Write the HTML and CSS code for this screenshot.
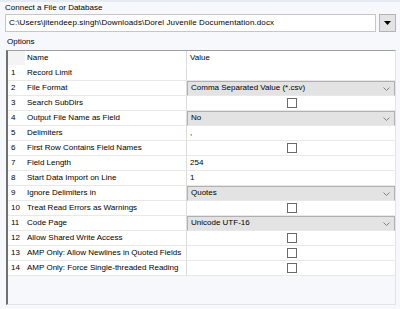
FILE: index.html
```html
<!DOCTYPE html>
<html lang="en">
<head>
  <meta charset="UTF-8">
  <title>Input Data - Configuration</title>
  <link rel="stylesheet" href="styles.css">
</head>
<body>
  <div class="panel">
    <!-- Connect a file -->
    <div class="label">Connect a File or Database</div>
    <div class="combo">
      <div class="combo-text">C:\Users\jitendeep.singh\Downloads\Dorel Juvenile Documentation.docx</div>
      <div class="combo-btn">
        <svg width="7" height="4" viewBox="0 0 7 4"><path d="M0 0h7L3.5 4z" fill="#000"/></svg>
      </div>
    </div>

    <!-- Options grid -->
    <div class="label options">Options</div>
    <div class="grid">
      <div class="row head">
        <div class="num"></div>
        <div class="name">Name</div>
        <div class="value">Value</div>
      </div>
      <div class="row first">
        <div class="num">1</div>
        <div class="name">Record Limit</div>
        <div class="value"></div>
      </div>
      <div class="row">
        <div class="num">2</div>
        <div class="name">File Format</div>
        <div class="value select">Comma Separated Value (*.csv)<svg class="chev" width="7" height="4" viewBox="0 0 7 4"><path d="M0.5 0.5L3.5 3.5L6.5 0.5" fill="none" stroke="#808080"/></svg></div>
      </div>
      <div class="row">
        <div class="num">3</div>
        <div class="name">Search SubDirs</div>
        <div class="value check"><span class="box"></span></div>
      </div>
      <div class="row">
        <div class="num">4</div>
        <div class="name">Output File Name as Field</div>
        <div class="value select">No<svg class="chev" width="7" height="4" viewBox="0 0 7 4"><path d="M0.5 0.5L3.5 3.5L6.5 0.5" fill="none" stroke="#808080"/></svg></div>
      </div>
      <div class="row">
        <div class="num">5</div>
        <div class="name">Delimiters</div>
        <div class="value">,</div>
      </div>
      <div class="row">
        <div class="num">6</div>
        <div class="name">First Row Contains Field Names</div>
        <div class="value check"><span class="box"></span></div>
      </div>
      <div class="row">
        <div class="num">7</div>
        <div class="name">Field Length</div>
        <div class="value">254</div>
      </div>
      <div class="row">
        <div class="num">8</div>
        <div class="name">Start Data Import on Line</div>
        <div class="value">1</div>
      </div>
      <div class="row">
        <div class="num">9</div>
        <div class="name">Ignore Delimiters in</div>
        <div class="value select">Quotes<svg class="chev" width="7" height="4" viewBox="0 0 7 4"><path d="M0.5 0.5L3.5 3.5L6.5 0.5" fill="none" stroke="#808080"/></svg></div>
      </div>
      <div class="row">
        <div class="num">10</div>
        <div class="name">Treat Read Errors as Warnings</div>
        <div class="value check"><span class="box"></span></div>
      </div>
      <div class="row">
        <div class="num">11</div>
        <div class="name">Code Page</div>
        <div class="value select">Unicode UTF-16<svg class="chev" width="7" height="4" viewBox="0 0 7 4"><path d="M0.5 0.5L3.5 3.5L6.5 0.5" fill="none" stroke="#808080"/></svg></div>
      </div>
      <div class="row">
        <div class="num">12</div>
        <div class="name">Allow Shared Write Access</div>
        <div class="value check"><span class="box"></span></div>
      </div>
      <div class="row">
        <div class="num">13</div>
        <div class="name">AMP Only: Allow Newlines in Quoted Fields</div>
        <div class="value check"><span class="box"></span></div>
      </div>
      <div class="row">
        <div class="num">14</div>
        <div class="name">AMP Only: Force Single-threaded Reading</div>
        <div class="value check"><span class="box"></span></div>
      </div>
    </div>
  </div>
</body>
</html>
```
FILE: styles.css
```css
/* Reset base */
* {
  box-sizing: border-box;
  margin: 0;
  padding: 0;
}
body {
  font-family: 'Liberation Sans', Arial, sans-serif;
  font-size: 8px;
  color: #000;
  background: #f7f8fb;
  border-top: 2px solid #e6eaf2;
  width: 400px;
  height: 309px;
  overflow: hidden;
}
.panel {
  padding: 0 4px 0 5px;
}
.label {
  height: 12px;
  line-height: 11px;
}
/* Combo del file */
.combo {
  display: flex;
  gap: 3px;
  height: 18px;
}
.combo-text {
  flex: 1;
  background: #fff;
  border: 1px solid #c6c6c6;
  line-height: 16px;
  padding-left: 3px;
  letter-spacing: 0.12px;
  white-space: nowrap;
  overflow: hidden;
}
.combo-btn {
  width: 17px;
  background: #e3e3e3;
  border: 1px solid #b4b4b4;
  display: flex;
  align-items: center;
  justify-content: center;
}
.label.options {
  margin-top: 4px;
  padding-left: 2px;
  height: 14px;
  line-height: 12px;
}
/* Griglia opzioni */
.grid {
  margin-left: 1px;
  height: 255px;
  border-top: 1px solid #a0a0a0;
  border-left: 2px solid #707070;
  border-right: 1px solid #e3e3e3;
  border-bottom: 1px solid #e3e3e3;
}
.row {
  display: grid;
  grid-template-columns: 17px 162px 1fr;
  height: 15px;
  line-height: 14px;
  background: #fff;
}
.row > div {
  border-bottom: 1px solid #e8e8e8;
  white-space: nowrap;
  overflow: hidden;
}
.num {
  padding-left: 3px;
}
.name {
  padding-left: 2px;
  border-right: 1px solid #dcdcdc;
}
.value {
  padding-left: 3px;
  position: relative;
}
.row.head .num {
  background: #f4f4f4;
}
.row.head > div {
  border-bottom-color: #fff;
}
.select {
  background: #e3e3e3;
  border: 1px solid #b0b0b0;
  line-height: 12px;
}
.chev {
  position: absolute;
  right: 4px;
  top: 5px;
}
.check {
  display: flex;
  justify-content: center;
  align-items: center;
  padding-left: 0;
}
.box {
  width: 10px;
  height: 10px;
  border: 1px solid #6a6a6a;
  background: #fff;
  margin-left: 1px;
}
```
